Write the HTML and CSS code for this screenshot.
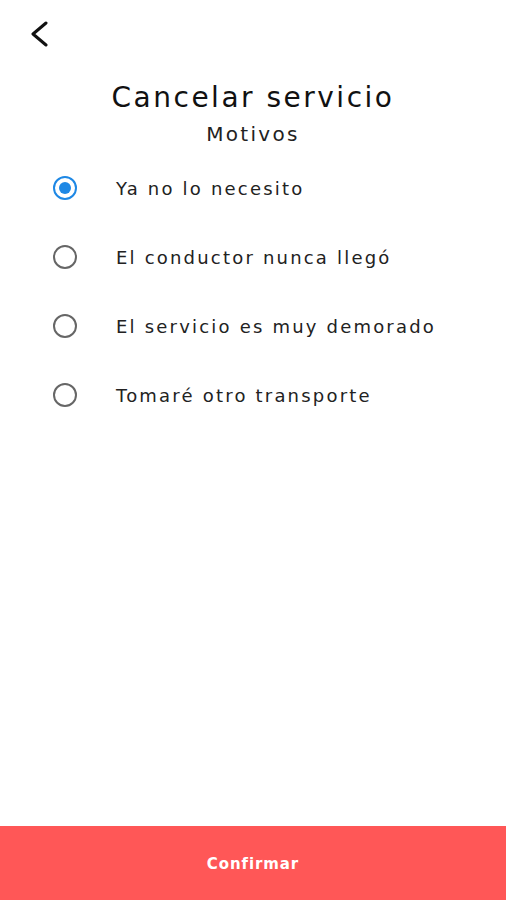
FILE: index.html
```html
<!DOCTYPE html>
<html lang="es">
<head>
    <meta charset="UTF-8">
    <meta name="viewport" content="width=device-width, initial-scale=1.0">
    <title>Cancelar servicio</title>
    <link rel="stylesheet" href="styles.css">
</head>
<body>
    <div class="screen">
        <header class="topbar">
            <button class="back" type="button" aria-label="Volver">
                <svg width="24" height="26" viewBox="0 0 24 26">
                    <path d="M17 2 L4 13 L17 24" fill="none" stroke="#111" stroke-width="3" stroke-linecap="round" stroke-linejoin="round"/>
                </svg>
            </button>
        </header>

        <h1 class="title">Cancelar servicio</h1>
        <p class="subtitle">Motivos</p>

        <form class="reasons" id="reasonForm">
            <label class="reason">
                <input type="radio" name="reason" value="1" checked>
                <span class="dot"></span>
                <span class="text">Ya no lo necesito</span>
            </label>
            <label class="reason">
                <input type="radio" name="reason" value="2">
                <span class="dot"></span>
                <span class="text">El conductor nunca llegó</span>
            </label>
            <label class="reason">
                <input type="radio" name="reason" value="3">
                <span class="dot"></span>
                <span class="text">El servicio es muy demorado</span>
            </label>
            <label class="reason">
                <input type="radio" name="reason" value="4">
                <span class="dot"></span>
                <span class="text">Tomaré otro transporte</span>
            </label>
        </form>

        <button class="confirm" type="submit" form="reasonForm">Confirmar</button>
    </div>
</body>
</html>
```

FILE: styles.css
```css
* {
    box-sizing: border-box;
}
body {
    margin: 0;
    background-color: #fff;
    font-family: "DejaVu Sans", sans-serif;
    color: #222;
}
.screen {
    height: 900px;
    display: flex;
    flex-direction: column;
}
.topbar {
    height: 70px;
    padding: 21px 0 0 29px;
}
.back {
    border: none;
    background: none;
    padding: 0;
    width: 24px;
    height: 26px;
    cursor: pointer;
}
.back svg {
    display: block;
}
.title {
    margin: 10px 0 0;
    text-align: center;
    font-size: 28px;
    font-weight: normal;
    letter-spacing: 2.5px;
    color: #111;
    line-height: 36px;
}
.subtitle {
    margin: 4px 0 0;
    text-align: center;
    font-size: 20px;
    letter-spacing: 2.3px;
    color: #222;
    line-height: 28px;
}
.reasons {
    margin-top: 28px;
    display: flex;
    flex-direction: column;
    gap: 45px;
    flex: 1;
}
.reason {
    display: flex;
    align-items: center;
    height: 24px;
    padding-left: 53px;
    cursor: pointer;
}
.reason input {
    display: none;
}
.dot {
    width: 24px;
    height: 24px;
    border: 2px solid #666;
    border-radius: 50%;
    display: flex;
    align-items: center;
    justify-content: center;
    flex-shrink: 0;
}
.reason input:checked + .dot {
    border-color: #1e88e5;
}
.reason input:checked + .dot::after {
    content: "";
    width: 12px;
    height: 12px;
    border-radius: 50%;
    background-color: #1e88e5;
}
.text {
    margin-left: 39px;
    font-size: 18px;
    letter-spacing: 2.2px;
    color: #222;
}
.confirm {
    height: 74px;
    border: none;
    background-color: #ff5757;
    color: #fff;
    font-family: "DejaVu Sans", sans-serif;
    font-size: 15px;
    font-weight: bold;
    letter-spacing: 0.9px;
    padding-top: 2px;
    cursor: pointer;
}
```
